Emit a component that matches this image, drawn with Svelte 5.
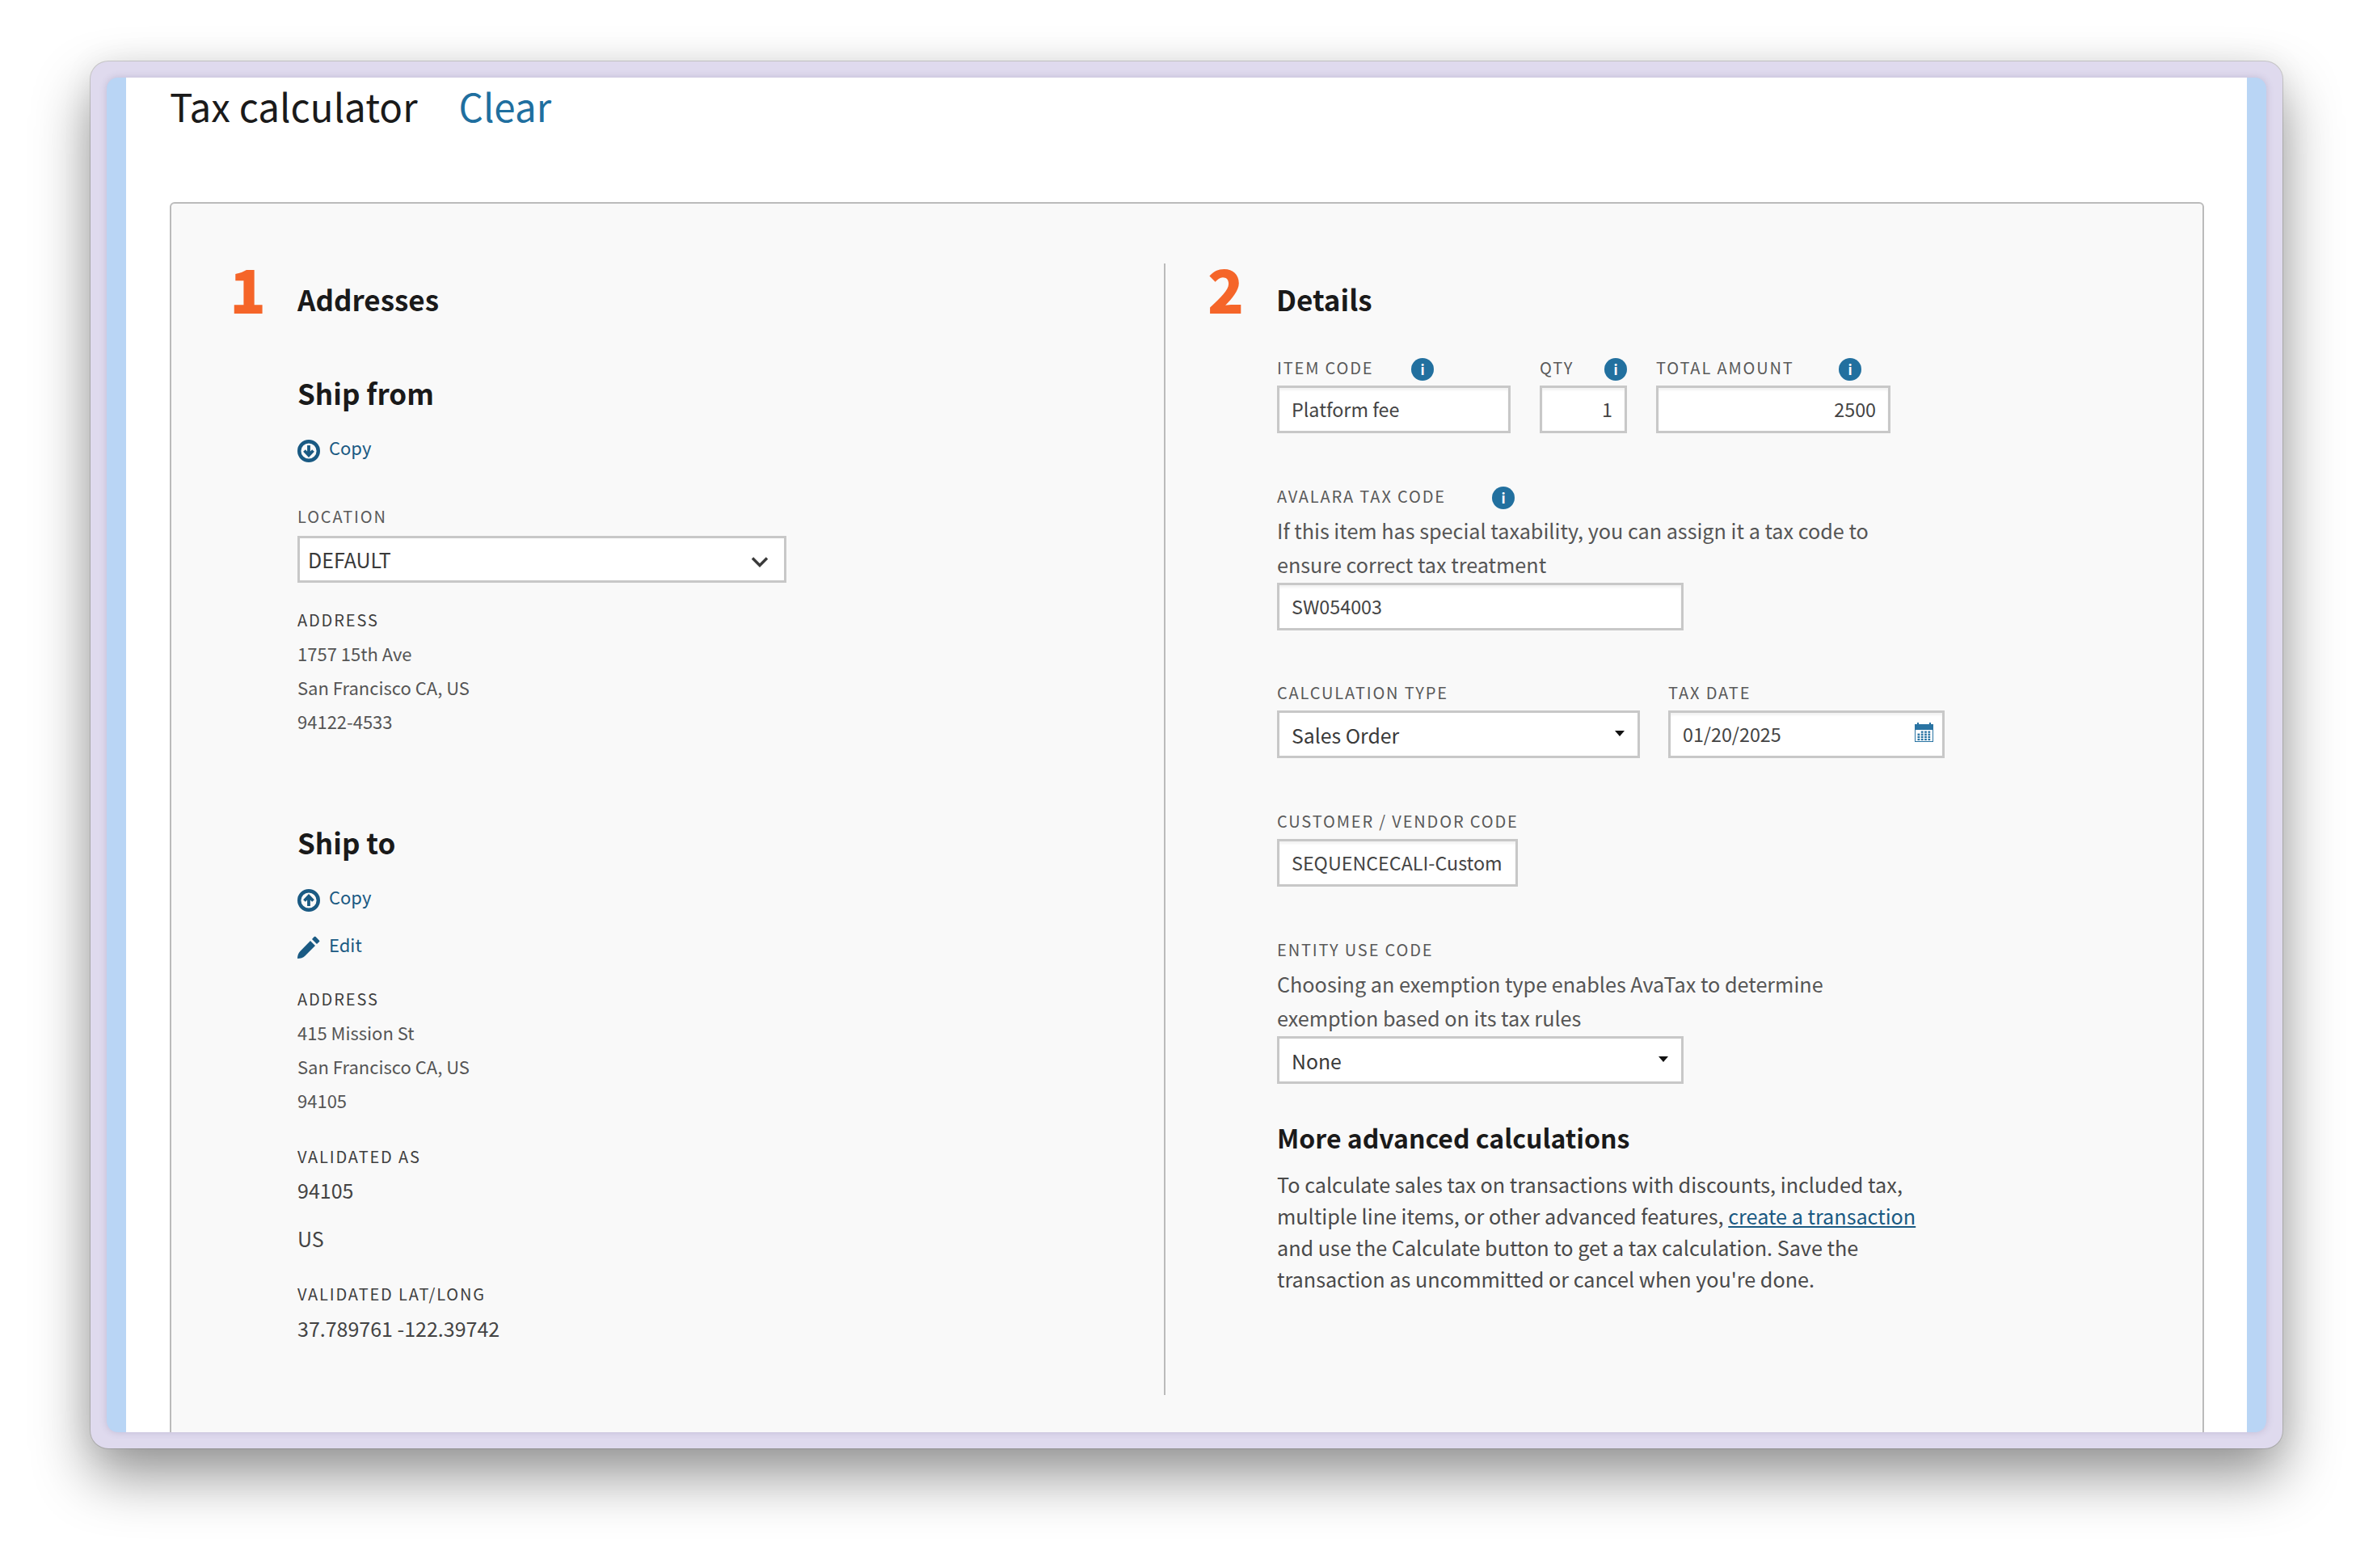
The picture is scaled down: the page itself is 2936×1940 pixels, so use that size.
<script>
  const cal = [0,1,2,3];
</script>

<div class="stage">
<div class="frame">
  <div class="inner">
    <main class="page">
      <header class="top">
        <h1>Tax calculator</h1>
        <a class="clear" href="#clear">Clear</a>
      </header>

      <section class="card">
        <div class="col left">
          <div class="head">
            <span class="num">1</span>
            <h2>Addresses</h2>
          </div>
          <div class="body">
            <h3 class="from">Ship from</h3>
            <div class="action">
              <svg viewBox="0 0 28 28" class="ic"><circle cx="14" cy="14" r="11.800" fill="none" stroke="#1a5a83" stroke-width="4.400"/><path d="M14 7v12M8.500 13.500l5.500 5.800 5.500-5.800" fill="none" stroke="#1a5a83" stroke-width="3.800"/></svg>
              <a href="#copy">Copy</a>
            </div>
            <div class="lab loc">LOCATION</div>
            <div class="field sel-loc">
              <span>DEFAULT</span>
              <svg viewBox="0 0 22 14" class="chev"><path d="M2 2.500 11 11.500 20 2.500" fill="none" stroke="#3a3a3a" stroke-width="3.400"/></svg>
            </div>
            <div class="lab dark addr1">ADDRESS</div>
            <p class="line">1757 15th Ave</p>
            <p class="line">San Francisco CA, US</p>
            <p class="line">94122-4533</p>

            <h3 class="to">Ship to</h3>
            <div class="action">
              <svg viewBox="0 0 28 28" class="ic"><circle cx="14" cy="14" r="11.800" fill="none" stroke="#1a5a83" stroke-width="4.400"/><path d="M14 21V9M8.500 14.500 14 8.700l5.500 5.800" fill="none" stroke="#1a5a83" stroke-width="3.800"/></svg>
              <a href="#copy">Copy</a>
            </div>
            <div class="action edit">
              <svg viewBox="0 0 28 28" class="ic pencil"><path d="M0 28c.1-4 1.300-7 3.300-9L16 6l6 6L9.300 24.700C7 26.900 4 28 0 28z" fill="#1a5a83"/><path d="M18 4l2.700-2.900c.6-.6 1.300-.6 1.900 0l4.300 4.300c.6.600.6 1.300 0 1.900L24 10z" fill="#1a5a83"/></svg>
              <a href="#edit">Edit</a>
            </div>
            <div class="lab dark addr2">ADDRESS</div>
            <p class="line">415 Mission St</p>
            <p class="line">San Francisco CA, US</p>
            <p class="line">94105</p>
            <div class="lab dark val1">VALIDATED AS</div>
            <p class="big v94">94105</p>
            <p class="big vus">US</p>
            <div class="lab dark val2">VALIDATED LAT/LONG</div>
            <p class="big vll">37.789761 -122.39742</p>
          </div>
        </div>

        <div class="col right">
          <div class="head">
            <span class="num two">2</span>
            <h2>Details</h2>
          </div>
          <div class="body">
            <div class="row r1">
              <div class="cell w-item">
                <div class="labrow"><span class="lab">ITEM CODE</span><span class="info i-item">i</span></div>
                <div class="field in"><span>Platform fee</span></div>
              </div>
              <div class="cell w-qty">
                <div class="labrow"><span class="lab">QTY</span><span class="info i-qty">i</span></div>
                <div class="field in end"><span>1</span></div>
              </div>
              <div class="cell w-total">
                <div class="labrow"><span class="lab">TOTAL AMOUNT</span><span class="info i-total">i</span></div>
                <div class="field in end"><span>2500</span></div>
              </div>
            </div>

            <div class="labrow tax"><span class="lab">AVALARA TAX CODE</span><span class="info i-tax">i</span></div>
            <p class="desc">If this item has special taxability, you can assign it a tax code to<br />ensure correct tax treatment</p>
            <div class="field in w-wide"><span>SW054003</span></div>

            <div class="row r3">
              <div class="cell w-calc">
                <div class="lab solo">CALCULATION TYPE</div>
                <div class="field in flat sel"><span>Sales Order</span><i class="caret"></i></div>
              </div>
              <div class="cell w-date">
                <div class="lab solo">TAX DATE</div>
                <div class="field in">
                  <span>01/20/2025</span>
                  <svg viewBox="0 0 23 24" class="cal">
                    <rect x="0.500" y="2.500" width="22" height="21" fill="#fff" stroke="#2a74a3" stroke-width="1"/>
                    <rect x="0" y="2" width="23" height="7" fill="#2a74a3"/>
                    <rect x="3" y="0" width="2" height="3" fill="#2a74a3"/><rect x="18" y="0" width="2" height="3" fill="#2a74a3"/>
                    {#each cal as r}
                      {#each cal as c}
                        {#if !(r === 0 && c === 0)}
                          <rect x={3.500 + c * 4.300} y={10.500 + r * 3.100} width="2.800" height="2.300" fill="#2a74a3" />
                        {/if}
                      {/each}
                    {/each}
                  </svg>
                </div>
              </div>
            </div>

            <div class="lab solo cust">CUSTOMER / VENDOR CODE</div>
            <div class="field in w-cust"><span>SEQUENCECALI-Custom</span></div>

            <div class="lab solo ent">ENTITY USE CODE</div>
            <p class="desc">Choosing an exemption type enables AvaTax to determine<br />exemption based on its tax rules</p>
            <div class="field in flat sel w-wide"><span>None</span><i class="caret"></i></div>

            <h3 class="more">More advanced calculations</h3>
            <p class="adv">To calculate sales tax on transactions with discounts, included tax,<br />multiple line items, or other advanced features, <a href="#tx">create a transaction</a><br />and use the Calculate button to get a tax calculation. Save the<br />transaction as uncommitted or cancel when you're done.</p>
          </div>
        </div>
      </section>
    </main>
  </div>
</div>
</div>

<style>
  :global(body) { margin: 0; background: #fff; }
  * { box-sizing: border-box; }
  .stage { height: 1940px; padding: 76px 112px 0; overflow: hidden; }
  .frame {
    height: 1716px;
    padding: 20px;
    background: #dfdaee;
    border-radius: 22px;
    box-shadow: 0 0 0 1px rgba(120,120,120,.35), 0 34px 70px rgba(0,0,0,.42), 0 0 40px rgba(0,0,0,.06);
    font-family: "Noto Sans CJK SC", "Noto Sans", sans-serif;
  }
  .inner {
    height: 100%;
    background: #b9d5f5;
    border-radius: 14px;
    padding: 0 24px;
    overflow: hidden;
    box-shadow: 0 0 10px rgba(70,60,110,.2);
  }
  .page { background: #fff; height: 100%; padding: 0 53px 0 54px; overflow: hidden; }
  .top { display: flex; align-items: baseline; gap: 51px; height: 154px; padding-top: 5px; }
  h1, h2, h3, p { margin: 0; }
  h1 { font-size: 47.500px; font-weight: 400; line-height: 60px; color: #1a1a1a; }
  .clear { font-size: 47.500px; line-height: 60px; color: #1f6f9f; text-decoration: none; }

  .card {
    display: grid;
    grid-template-columns: 1228px 1fr;
    height: 1600px;
    padding-top: 74px;
    background: #f9f9f9;
    border: 2px solid #bbb;
    border-radius: 6px;
    align-items: start;
  }
  .col { height: 1400px; }
  .left { padding-left: 72px; }
  .right { border-left: 2px solid #bbb; padding-left: 52px; }
  .head { display: flex; align-items: flex-start; height: 60px; }
  .num { width: 84px; font-size: 74px; line-height: 60px; font-weight: 900; color: #f56529; }
  .num.two { width: 85px; }
  h2 { font-size: 35px; line-height: 44px; font-weight: 600; color: #1a1a1a; margin-top: 22px; }
  .body { padding-left: 84px; }
  .right .body { padding-left: 86px; }
  h3 { font-size: 35px; line-height: 46px; font-weight: 600; color: #1a1a1a; }
  .from { margin-top: 77px; }
  .to { margin-top: 106px; }

  .action { display: flex; align-items: flex-start; gap: 11px; height: 30px; margin-top: 30px; }
  .action.edit { margin-top: 29px; }
  .action a { font-size: 22px; line-height: 28px; color: #1a5a83; text-decoration: none; }
  .ic { width: 28px; height: 28px; margin-top: 5px; display: block; flex: none; }
  .pencil { margin-top: 4px; }

  .lab { font-size: 20px; line-height: 26px; letter-spacing: 1.850px; color: #5a5a5a; white-space: nowrap; }
  .lab.dark { color: #3f3f3f; }
  .loc { margin-top: 57px; }
  .addr1 { margin-top: 33px; }
  .addr2 { margin-top: 39px; }
  .val1 { margin-top: 36px; }
  .val2 { margin-top: 35px; }
  .line { font-size: 22px; line-height: 42px; color: #555; }
  .addr1 + .line, .addr2 + .line { margin-top: 7px; }
  .big { font-size: 25px; line-height: 42px; color: #444; }
  .v94 { margin-top: 7px; }
  .vus { margin-top: 18px; }
  .vll { margin-top: 8px; }

  .field {
    display: flex;
    align-items: center;
    justify-content: space-between;
    height: 59px;
    background: #fff;
    border: 3px solid #c8c8c8;
    padding: 0 15px 1px;
    font-size: 23.300px;
    color: #444;
    box-shadow: inset 0 3px 3px rgba(0,0,0,.05);
    white-space: nowrap;
  }
  .field.flat { box-shadow: none; padding-bottom: 0; }
  .field.sel { font-size: 24.800px; color: #3a3a3a; }
  .field.end { justify-content: flex-end; }
  .sel-loc { width: 605px; height: 58px; margin-top: 11px; padding: 0 19px 0 10px; font-size: 25px; color: #3a3a3a; box-shadow: none; }
  .chev { width: 22px; height: 14px; margin-top: 6px; }
  .caret { width: 0; height: 0; border: 6px solid transparent; border-top: 7px solid #111; border-bottom: 0; margin-right: 1px; margin-top: -2px; }
  .cal { width: 23px; height: 24px; margin-right: -4px; margin-top: -4px; }

  .row { display: flex; gap: 36px; }
  .r1 { margin-top: 56px; }
  .r3 { margin-top: 64px; }
  .w-item { width: 289px; }
  .w-qty { width: 108px; }
  .w-total { width: 290px; }
  .w-calc { width: 449px; }
  .r3 .w-calc { margin-right: -1px; }
  .w-date { width: 342px; }
  .w-wide { width: 503px; }
  .w-cust { width: 298px; }
  .labrow { position: relative; height: 35px; }
  .info {
    position: absolute; top: 1px; width: 28px; height: 28px; border-radius: 50%;
    background: #22709f; color: #fff; font: 700 17px/28px "Noto Sans CJK SC", sans-serif; text-align: center;
  }
  .i-item { left: 166px; }
  .i-qty { left: 80px; }
  .i-total { left: 226px; }
  .i-tax { left: 266px; }
  .tax { margin-top: 65px; }
  .desc { font-size: 25.200px; line-height: 42px; color: #555; margin-top: -1px; margin-bottom: 2px; white-space: nowrap; }
  .solo { height: 35px; }
  .cust { margin-top: 65px; }
  .ent { margin-top: 65px; }
  .more { margin-top: 43px; font-size: 32px; }
  .adv { margin-top: 16px; font-size: 25.200px; line-height: 39px; color: #4a4a4a; white-space: nowrap; }
  .adv a { color: #1a5a83; text-decoration: underline; }
</style>
